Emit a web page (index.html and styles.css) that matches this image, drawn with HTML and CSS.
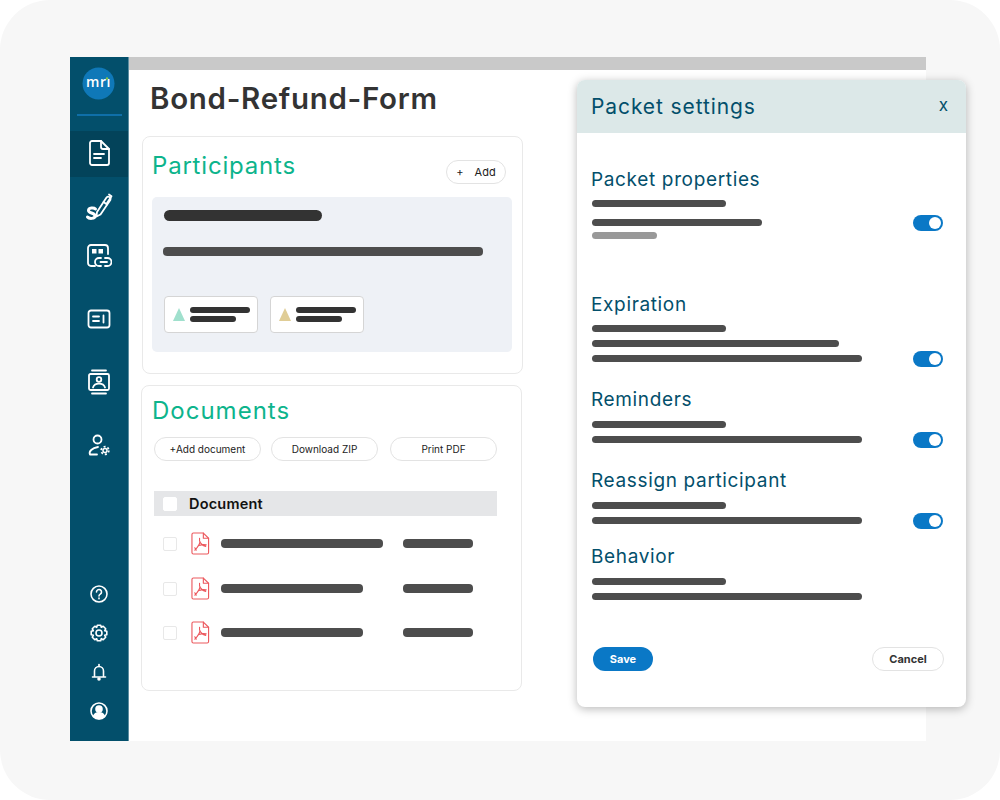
FILE: index.html
```html
<!DOCTYPE html>
<html lang="en">
<head>
  <meta charset="UTF-8" />
  <meta name="viewport" content="width=device-width, initial-scale=1" />
  <title>Bond-Refund-Form</title>
  <link rel="stylesheet" href="styles.css">
</head>
<body>
  <div class="frame">
    <div class="app">
      <aside class="sidebar">
        <div class="logo">
          <svg width="33" height="33" viewBox="0 0 33 33">
            <circle cx="16.5" cy="16.5" r="16" fill="#0f78b8"/>
            <text x="16.500" y="20" text-anchor="middle" class="logo-text">mrı</text>
            <circle cx="25" cy="11.500" r="1.200" fill="#8cc63f"/>
          </svg>
        </div>
        <div class="logo-line"></div>

        <nav class="nav-top">
          <a class="nav-item active">
            <svg width="24" height="28" viewBox="0 0 24 28" class="icon">
              <path d="M5 2h9l8 8v14a2 2 0 0 1-2 2H5a2 2 0 0 1-2-2V4a2 2 0 0 1 2-2z"/>
              <path d="M14 2v6a2 2 0 0 0 2 2h6"/>
              <path d="M7 15h10M7 19h7"/>
            </svg>
          </a>
          <a class="nav-item sign">
            <svg width="28" height="28" viewBox="0 0 28 28" class="icon">
              <path d="M12 19L21.500 4.500a2.300 2.300 0 0 1 3.800 2.500L15.500 21.500l-4 2z"/>
              <path d="M18.500 9l3.500 2.500M24 1.500l2.500 1.800-5 7.500"/>
              <path d="M10.500 16C9 14.500 3.500 14.500 3.500 17.500c0 3 6.500 2 6.500 5.500 0 3-6 3-7.500 1" class="thick"/>
            </svg>
          </a>
          <a class="nav-item link">
            <svg width="26" height="26" viewBox="0 0 26 26" class="icon">
              <path d="M9 23H5a3 3 0 0 1-3-3V5a3 3 0 0 1 3-3h14a3 3 0 0 1 3 3v6"/>
              <rect x="6" y="6" width="4.500" height="4.500" fill="#fff" stroke="none"/>
              <rect x="12.500" y="6" width="4.500" height="4.500" fill="#fff" stroke="none"/>
              <path d="M15 15h-2a4 4 0 0 0 0 8h2M19 15h2.500a4 4 0 0 1 0 8H19M14.500 19h6.500"/>
            </svg>
          </a>
          <a class="nav-item card-icon">
            <svg width="24" height="20" viewBox="0 0 24 20" class="icon">
              <rect x="1.500" y="1.500" width="21" height="17" rx="2.500"/>
              <path d="M6 7.500h6M6 12h6M16.500 6.500v7"/>
            </svg>
          </a>
          <a class="nav-item contact">
            <svg width="24" height="26" viewBox="0 0 24 26" class="icon">
              <path d="M5 1.500h14M5 24.500h14"/>
              <rect x="2" y="5" width="20" height="16" rx="1.500"/>
              <circle cx="12" cy="10.500" r="2.300"/>
              <path d="M6 18.500c1-3 3.500-3.800 6-3.800s5 .8 6 3.800"/>
            </svg>
          </a>
          <a class="nav-item">
            <svg width="24" height="24" viewBox="0 0 24 24" class="icon">
              <circle cx="10.500" cy="6.500" r="4"/>
              <path d="M3 21.500H10M3 21.500c-1.500-3 2-6.500 8-7.500"/>
              <circle cx="18" cy="17.500" r="2" stroke-width="1.500"/>
              <circle cx="18" cy="17.500" r="3.800" stroke-width="1.800" stroke-linecap="butt" stroke-dasharray="2 2"/>
            </svg>
          </a>
        </nav>

        <nav class="nav-bottom">
          <a class="nav-small">
            <svg width="18" height="18" viewBox="0 0 18 18" class="icon thin">
              <circle cx="9" cy="9" r="8"/>
              <path d="M6.500 7a2.500 2.500 0 1 1 3.800 2.100C9.300 9.700 9 10.200 9 11M9 13v.8"/>
            </svg>
          </a>
          <a class="nav-small">
            <svg width="18" height="18" viewBox="0 0 18 18" class="icon thin">
              <circle cx="9" cy="9" r="3"/>
              <path d="M7.300 1.200h3.400l.6 2.100 1.900-1 2.500 2.500-1 1.900 2.100.6v3.400l-2.100.6 1 1.900-2.500 2.500-1.900-1-.6 2.100H7.300l-.6-2.100-1.900 1-2.500-2.500 1-1.900-2.100-.6V7.300l2.100-.6-1-1.900 2.500-2.500 1.900 1z" stroke-linejoin="round"/>
            </svg>
          </a>
          <a class="nav-small">
            <svg width="18" height="18" viewBox="0 0 18 18" class="icon thin">
              <path d="M4.500 14V8a4.500 4.500 0 0 1 9 0v6M2.500 14h13"/>
              <path d="M9 1.500v2"/>
              <circle cx="9" cy="16" r="1" fill="#fff"/>
            </svg>
          </a>
          <a class="nav-small">
            <svg width="18" height="18" viewBox="0 0 18 18" class="icon thin">
              <circle cx="9" cy="9" r="8"/>
              <circle cx="9" cy="7" r="3" fill="#fff"/>
              <path d="M3.500 14.500c1-3 3-3.800 5.500-3.800s4.500.8 5.500 3.800A8 8 0 0 1 3.500 14.500z" fill="#fff"/>
            </svg>
          </a>
        </nav>
      </aside>

      <main class="main">
        <div class="top-bar"></div>
        <div class="content">
          <h1 class="page-title">Bond-Refund-Form</h1>

          <section class="card participants">
            <div class="card-head">
              <h2>Participants</h2>
              <button class="pill add-btn"><span>+</span><span>Add</span></button>
            </div>
            <div class="panel">
              <div class="bar bar-title"></div>
              <div class="bar bar-desc"></div>
              <div class="chips">
                <div class="chip">
                  <span class="tri tri-green"></span>
                  <div class="chip-lines">
                    <div class="bar chip-long"></div>
                    <div class="bar chip-short"></div>
                  </div>
                </div>
                <div class="chip">
                  <span class="tri tri-gold"></span>
                  <div class="chip-lines">
                    <div class="bar chip-long"></div>
                    <div class="bar chip-short"></div>
                  </div>
                </div>
              </div>
            </div>
          </section>

          <section class="card documents">
            <h2>Documents</h2>
            <div class="doc-actions">
              <button class="pill">+Add document</button>
              <button class="pill">Download ZIP</button>
              <button class="pill">Print PDF</button>
            </div>
            <div class="doc-header">
              <span class="check check-head"></span>
              <span>Document</span>
            </div>
            <div class="doc-row">
              <span class="check"></span>
              <svg width="19" height="23" viewBox="0 0 20 24" class="pdf"><path d="M2.500 1h10.500l5.500 5.500V21.500a1.500 1.500 0 0 1-1.500 1.500H2.500A1.500 1.500 0 0 1 1 21.500v-19A1.500 1.500 0 0 1 2.500 1z"/><path d="M13 1v5.500h5.500"/><path d="M9 6.500c-.6 3 1 7 6.500 8.500M9.500 10c-.5 3-2.500 6-5.500 9M4 16.500l1.500 2.500M9 14c2-.8 4-1 7-.5"/></svg>
              <div class="bar doc-name"></div>
              <div class="bar doc-meta"></div>
            </div>
            <div class="doc-row">
              <span class="check"></span>
              <svg width="19" height="23" viewBox="0 0 20 24" class="pdf"><path d="M2.500 1h10.500l5.500 5.500V21.500a1.500 1.500 0 0 1-1.500 1.500H2.500A1.500 1.500 0 0 1 1 21.500v-19A1.500 1.500 0 0 1 2.500 1z"/><path d="M13 1v5.500h5.500"/><path d="M9 6.500c-.6 3 1 7 6.500 8.500M9.500 10c-.5 3-2.500 6-5.500 9M4 16.500l1.500 2.500M9 14c2-.8 4-1 7-.5"/></svg>
              <div class="bar doc-name doc-name-short"></div>
              <div class="bar doc-meta"></div>
            </div>
            <div class="doc-row">
              <span class="check"></span>
              <svg width="19" height="23" viewBox="0 0 20 24" class="pdf"><path d="M2.500 1h10.500l5.500 5.500V21.500a1.500 1.500 0 0 1-1.500 1.500H2.500A1.500 1.500 0 0 1 1 21.500v-19A1.500 1.500 0 0 1 2.500 1z"/><path d="M13 1v5.500h5.500"/><path d="M9 6.500c-.6 3 1 7 6.500 8.500M9.500 10c-.5 3-2.500 6-5.500 9M4 16.500l1.500 2.500M9 14c2-.8 4-1 7-.5"/></svg>
              <div class="bar doc-name doc-name-short"></div>
              <div class="bar doc-meta"></div>
            </div>
          </section>
        </div>
      </main>
    </div>

    <!-- Settings dialog floats over the page -->
    <div class="modal">
      <div class="modal-head">
        <h2>Packet settings</h2>
        <span class="modal-close">x</span>
      </div>
      <div class="modal-body">
        <section class="setting s-props">
          <h3>Packet properties</h3>
          <div class="bar line line-short"></div>
          <div class="row">
            <div class="bar line line-mid"></div>
            <span class="toggle"></span>
          </div>
          <div class="bar line line-note"></div>
        </section>
        <section class="setting s-expiry">
          <h3>Expiration</h3>
          <div class="bar line line-short"></div>
          <div class="bar line line-wide"></div>
          <div class="row">
            <div class="bar line line-full"></div>
            <span class="toggle"></span>
          </div>
        </section>
        <section class="setting s-remind">
          <h3>Reminders</h3>
          <div class="bar line line-short"></div>
          <div class="row">
            <div class="bar line line-full"></div>
            <span class="toggle"></span>
          </div>
        </section>
        <section class="setting s-reassign">
          <h3>Reassign participant</h3>
          <div class="bar line line-short"></div>
          <div class="row">
            <div class="bar line line-full"></div>
            <span class="toggle"></span>
          </div>
        </section>
        <section class="setting s-behavior">
          <h3>Behavior</h3>
          <div class="bar line line-short"></div>
          <div class="bar line line-full"></div>
        </section>
        <div class="modal-foot">
          <button class="btn-save">Save</button>
          <button class="btn-cancel">Cancel</button>
        </div>
      </div>
    </div>
  </div>
</body>
</html>
```

FILE: styles.css
```css
* {
  box-sizing: border-box;
}
body {
  margin: 0;
  background: #fff;
  font-family: Inter, "Liberation Sans", sans-serif;
  color: #222;
}
h1, h2, h3 {
  margin: 0;
  font-weight: 400;
}
.frame {
  position: relative;
  width: 1000px;
  height: 800px;
  padding: 57px 74px 59px 70px;
  background: #f7f7f7;
  border-radius: 50px;
  overflow: hidden;
}
.app {
  display: flex;
  height: 100%;
  background: #fff;
}

/* Sidebar */
.sidebar {
  width: 59px;
  flex-shrink: 0;
  display: flex;
  flex-direction: column;
  align-items: center;
  background: #034f6b;
  border-right: 1px solid #5d8ea1;
}
.logo {
  height: 33px;
  margin-top: 10px;
  margin-right: 1px;
}
.logo-text {
  font-family: "Open Sans", sans-serif;
  font-size: 14px;
  font-weight: 600;
  fill: #fff;
  letter-spacing: 0.600px;
}
.logo-line {
  width: 45px;
  height: 2px;
  margin-top: 14px;
  background: #0f6fa8;
}
.nav-top {
  width: 100%;
  margin-top: 15px;
}
.nav-item {
  display: flex;
  justify-content: center;
  align-items: center;
  height: 46px;
}
.nav-item.active {
  background: #03435a;
  padding-bottom: 2px;
  margin-bottom: 7px;
}
.nav-item.sign {
  margin-bottom: 3px;
}
.nav-item.link {
  margin-bottom: 17px;
}
.nav-item.card-icon {
  margin-bottom: 17px;
}
.nav-item.contact {
  margin-bottom: 17px;
}
.icon {
  fill: none;
  stroke: #fff;
  stroke-width: 1.800;
  stroke-linecap: round;
  stroke-linejoin: round;
}
.icon.thin {
  stroke-width: 1.600;
}
.icon .thick {
  stroke-width: 3;
}
.nav-bottom {
  margin-top: auto;
  margin-bottom: 21px;
  display: flex;
  flex-direction: column;
  gap: 21px;
}
.nav-small {
  display: block;
  height: 18px;
}
.nav-small svg {
  display: block;
}

/* Main area */
.main {
  flex: 1;
  display: flex;
  flex-direction: column;
}
.top-bar {
  height: 13px;
  background: #c9c9c9;
}
.content {
  padding: 8px 0 0 12px;
}
.page-title {
  margin-left: 9px;
  font-size: 29.500px;
  font-weight: 600;
  line-height: 40px;
  color: #333;
  letter-spacing: 0.700px;
}
.card {
  width: 381px;
  background: #fff;
  border: 1px solid #e9e9e9;
  border-radius: 8px;
}
.card h2 {
  font-size: 24px;
  line-height: 30px;
  color: #0db48c;
  letter-spacing: 0.800px;
}
.participants {
  height: 238px;
  margin-top: 18px;
  margin-left: 1px;
  padding: 14px 10px 0 9px;
}
.card-head {
  display: flex;
  justify-content: space-between;
  align-items: flex-start;
}
.pill {
  height: 24px;
  padding: 0;
  background: #fff;
  border: 1px solid #e3e3e3;
  border-radius: 12px;
  font-family: inherit;
  font-size: 10px;
  color: #222;
}
.add-btn {
  width: 60px;
  margin-top: 9px;
  margin-right: 6px;
  font-size: 11px;
  display: flex;
  justify-content: center;
  align-items: center;
  gap: 11px;
}
.panel {
  height: 155px;
  margin-top: 13px;
  padding: 13px 12px 0;
  background: #eef1f6;
  border-radius: 5px;
}
.bar {
  background: #4d4d4d;
  border-radius: 4px;
}
.bar-title {
  width: 158px;
  height: 11px;
  background: #333;
  border-radius: 6px;
}
.bar-desc {
  width: 320px;
  height: 9px;
  margin-top: 26px;
  margin-left: -1px;
}
.chips {
  display: flex;
  gap: 12px;
  margin-top: 40px;
}
.chip {
  width: 94px;
  height: 37px;
  display: flex;
  align-items: center;
  gap: 5px;
  padding-left: 8px;
  background: #fff;
  border: 1px solid #d5d5d5;
  border-radius: 4px;
}
.tri {
  width: 0;
  height: 0;
  border-left: 6.500px solid transparent;
  border-right: 6.500px solid transparent;
  border-bottom: 13px solid;
}
.tri-green {
  border-bottom-color: #a0e0cd;
}
.tri-gold {
  border-bottom-color: #e0cd96;
}
.chip-lines {
  display: flex;
  flex-direction: column;
  gap: 3px;
}
.chip-long,
.chip-short {
  height: 6px;
  background: #333;
}
.chip-long {
  width: 60px;
}
.chip-short {
  width: 46px;
}

.documents {
  height: 306px;
  margin-top: 11px;
  padding: 10px 0 0 11px;
}
.documents h2 {
  margin-left: -1px;
  letter-spacing: 1px;
}
.doc-actions {
  display: flex;
  gap: 10px;
  margin-top: 11px;
  margin-left: 1px;
}
.doc-actions .pill {
  width: 107px;
}
.doc-actions .pill:last-child {
  margin-left: 2px;
}
.doc-header {
  display: flex;
  align-items: center;
  gap: 12px;
  width: 343px;
  height: 25px;
  margin-top: 30px;
  margin-left: 1px;
  padding-left: 9px;
  background: #e5e6e8;
  font-size: 14.500px;
  font-weight: 600;
  letter-spacing: 0.200px;
  color: #111;
}
.check {
  width: 14px;
  height: 14px;
  flex-shrink: 0;
  background: #fff;
  border: 1px solid #e8e8e8;
  border-radius: 2px;
}
.check-head {
  border-color: #fff;
}
.doc-row {
  display: flex;
  align-items: center;
  height: 45px;
  margin-left: 10px;
}
.doc-row:nth-child(4) {
  margin-top: 5px;
}
.doc-row:nth-child(6) {
  margin-top: -1px;
}
.pdf {
  flex-shrink: 0;
  margin-left: 14px;
  fill: none;
  stroke: #ec5a5f;
  stroke-width: 1.200;
  stroke-linecap: round;
  stroke-linejoin: round;
}
.doc-name {
  width: 162px;
  height: 9px;
  margin-left: 11px;
}
.doc-name-short {
  width: 142px;
}
.doc-meta {
  width: 70px;
  height: 9px;
  margin-left: 20px;
}
.doc-name-short + .doc-meta {
  margin-left: 40px;
}

/* Packet settings dialog */
.modal {
  position: absolute;
  top: 80px;
  left: 577px;
  width: 389px;
  height: 627px;
  background: #fff;
  border-radius: 8px;
  box-shadow: 0 2px 10px rgb(0 0 0 / 0.28);
  overflow: hidden;
}
.modal-head {
  display: flex;
  justify-content: space-between;
  align-items: center;
  height: 53px;
  padding: 0 18px 0 14px;
  background: #dce8e8;
  color: #034f6b;
}
.modal-head h2 {
  font-size: 21px;
  letter-spacing: 0.900px;
}
.modal-close {
  font-size: 17px;
  padding-bottom: 3px;
}
.modal-body {
  padding: 35px 23px 0 15px;
}
.setting h3 {
  margin-left: -1px;
  font-size: 19px;
  line-height: 24px;
  color: #034f6b;
  letter-spacing: 0.650px;
}
.line {
  height: 7px;
  margin-top: 8px;
}
.line-short {
  width: 134px;
  margin-top: 9px;
}
.s-props .line-short,
.s-expiry .line-short {
  margin-top: 8px;
}
.line-mid {
  width: 170px;
}
.line-wide {
  width: 247px;
}
.line-full {
  width: 270px;
}
.line-note {
  width: 65px;
  margin-top: 6px;
  background: #999;
}
.row {
  display: flex;
  justify-content: space-between;
  align-items: center;
  height: 7px;
  margin-top: 8px;
}
.row .line {
  margin-top: 0;
}
.s-props .row {
  margin-top: 12px;
}
.s-expiry {
  margin-top: 54px;
}
.s-remind {
  margin-top: 26px;
}
.s-reassign {
  margin-top: 26px;
}
.s-behavior {
  margin-top: 21px;
}
.toggle {
  position: relative;
  width: 30px;
  height: 16px;
  flex-shrink: 0;
  background: #0a78c6;
  border-radius: 8px;
}
.toggle::after {
  content: "";
  position: absolute;
  top: 2px;
  right: 2px;
  width: 12px;
  height: 12px;
  background: #fff;
  border-radius: 50%;
}
.modal-foot {
  display: flex;
  justify-content: space-between;
  margin-top: 47px;
  margin-right: -1px;
}
.btn-save,
.btn-cancel {
  height: 24px;
  padding: 0;
  border-radius: 12px;
  font-family: inherit;
  font-size: 11px;
  font-weight: 700;
}
.btn-save {
  width: 60px;
  margin-left: 1px;
  background: #0a78c6;
  border: 0;
  color: #fff;
}
.btn-cancel {
  width: 72px;
  background: #fff;
  border: 1px solid #e3e3e3;
  color: #333;
}
```
